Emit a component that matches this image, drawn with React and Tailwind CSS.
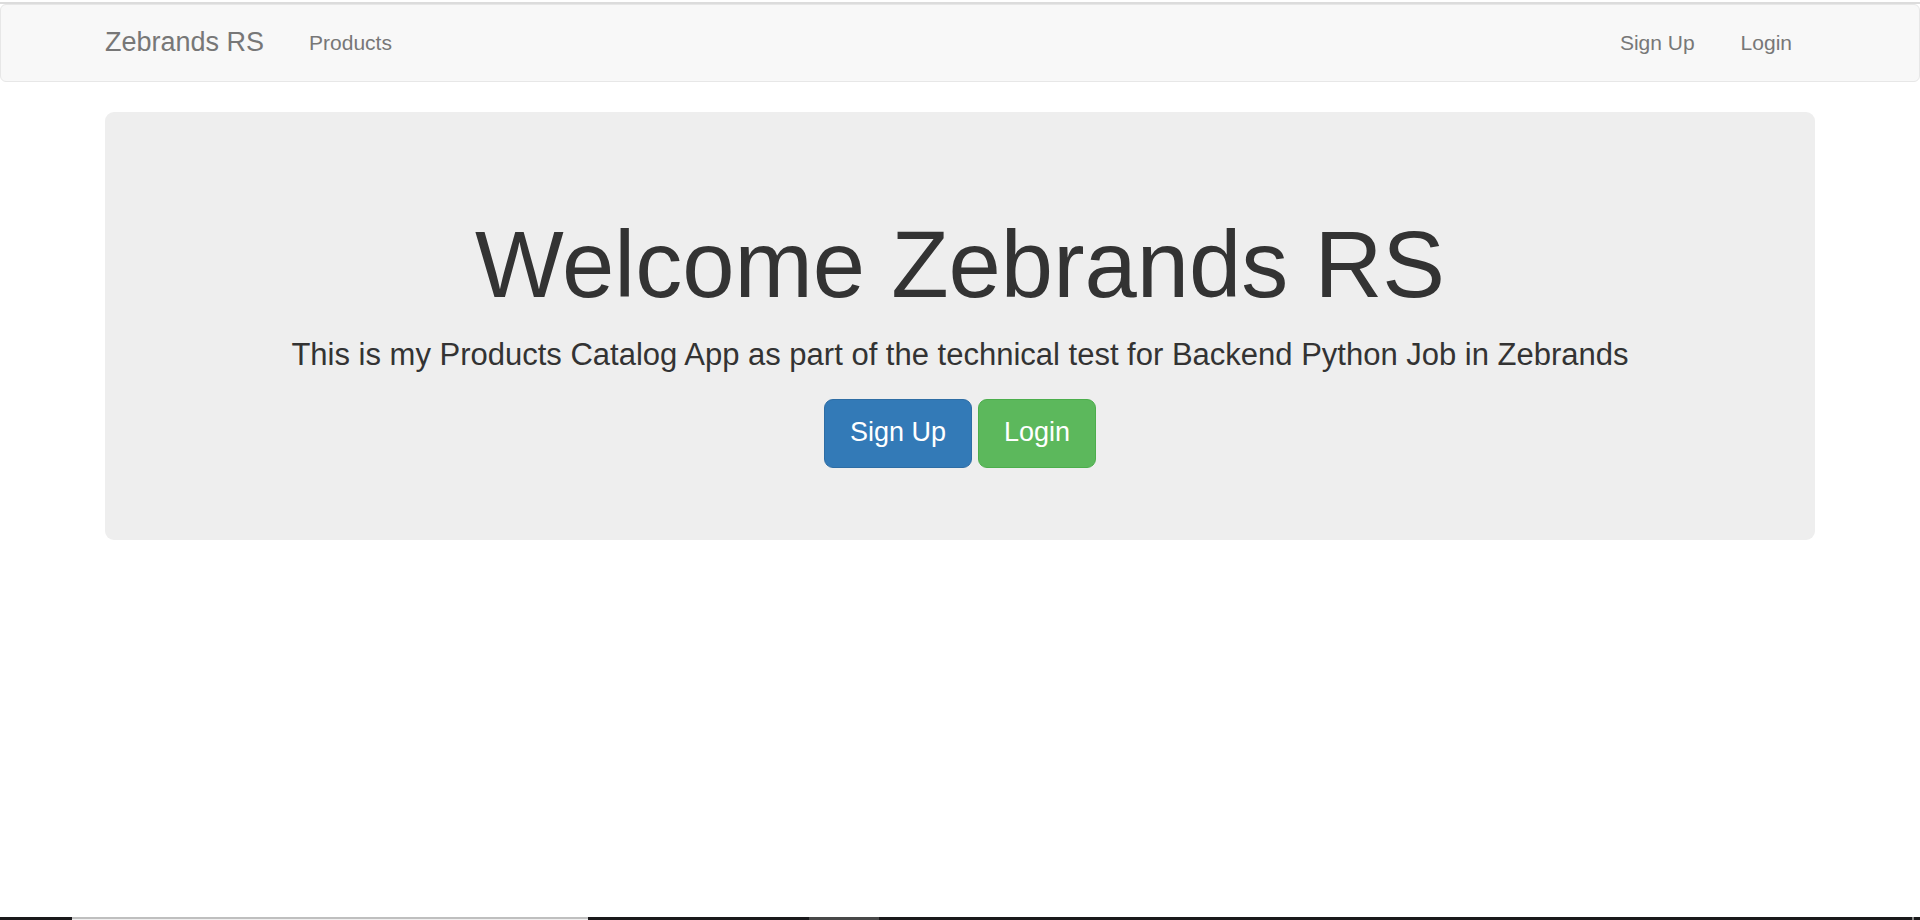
const navLink =
  "flex items-center px-[23px] text-[21px] leading-[30px] text-[#777] hover:text-[#333]";

const largeButton =
  "rounded-[9px] border px-[25px] pt-[14px] pb-[17px] text-[27px] leading-9 text-white";

function Navbar() {
  return (
    <nav className="rounded-md border border-[#e7e7e7] bg-[#f8f8f8] px-6">
      <div className="mx-auto flex h-[76px] max-w-[1710px] items-stretch justify-between">
        <div className="flex">
          <a
            href="#home"
            className="flex items-center pr-[22px] pb-[2px] text-[27px] leading-[30px] text-[#777] hover:text-[#5e5e5e]"
          >
            Zebrands RS
          </a>
          <a href="#products" className={navLink}>
            Products
          </a>
        </div>
        <div className="flex">
          <a href="#signup" className={navLink}>
            Sign Up
          </a>
          <a href="#login" className={navLink}>
            Login
          </a>
        </div>
      </div>
    </nav>
  );
}

function Hero() {
  return (
    <main className="mt-[30px] px-6">
      <section className="mx-auto max-w-[1710px] rounded-[9px] bg-[#eee] px-[90px] pt-[101px] pb-[72px] text-center">
        <h1 className="text-[94px] leading-[104px] font-medium">Welcome Zebrands RS</h1>
        <p className="mt-4 text-[31px] leading-[44px]">
          This is my Products Catalog App as part of the technical test for Backend Python Job in
          Zebrands
        </p>
        <div className="mt-[22px] flex justify-center gap-[6px]">
          <button type="button" className={`${largeButton} border-[#2e6da4] bg-[#337ab7]`}>
            Sign Up
          </button>
          <button type="button" className={`${largeButton} border-[#4cae4c] bg-[#5cb85c]`}>
            Login
          </button>
        </div>
      </section>
    </main>
  );
}

function BottomEdge() {
  return (
    <div aria-hidden="true" className="mt-auto flex h-[3px] bg-[#1a191b]">
      <div className="w-[72px]" />
      <div className="w-[516px] border-t-2 border-[#bfbfbf] bg-[#f0f0f0]" />
      <div className="w-[221px]" />
      <div className="w-[70px] bg-[#484848]" />
      <div className="mr-[6px] ml-auto w-[2px] bg-[#858585]" />
    </div>
  );
}

export default function App() {
  return (
    <div className="flex min-h-screen flex-col bg-white font-['Liberation_Sans',Arial,sans-serif] text-[#333]">
      <div aria-hidden="true" className="mt-[2px] h-[2px] bg-[#dcdcdc]" />
      <Navbar />
      <Hero />
      <BottomEdge />
    </div>
  );
}
